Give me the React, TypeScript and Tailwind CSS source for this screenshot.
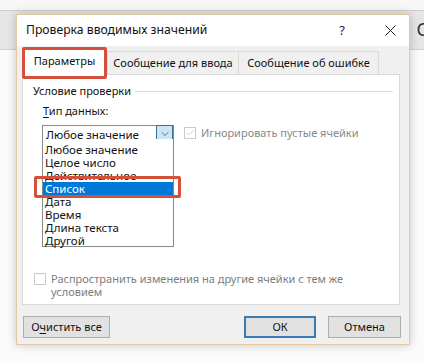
import { Check, ChevronDown } from 'lucide-react';

const font = { fontFamily: '"Noto Sans", "Open Sans", sans-serif' };

const items = [
  'Любое значение',
  'Целое число',
  'Действительное',
  'Список',
  'Дата',
  'Время',
  'Длина текста',
  'Другой',
];

function CloseIcon() {
  return (
    <svg width="11" height="11" viewBox="0 0 11 11" className="text-[#222]">
      <path d="M0.5 0.5 L10.5 10.5 M10.5 0.5 L0.5 10.5" stroke="currentColor" strokeWidth="1" />
    </svg>
  );
}

function Button({ children, primary, className }: { children: React.ReactNode; primary?: boolean; className?: string }) {
  return (
    <div
      className={
        'h-[22px] flex items-center justify-center bg-[#e1e1e1] text-[11px] text-[#111] whitespace-nowrap ' +
        (primary ? 'border-2 border-[#3a7bb0] ' : 'border border-[#adadad] ') +
        (className ?? '')
      }
    >
      {children}
    </div>
  );
}

export default function App() {
  return (
    <div className="relative w-[424px] h-[361px] overflow-hidden bg-[#fbfbfb]" style={font}>
      {/* excel ribbon behind the dialog */}
      <div className="h-[11px] bg-[#f7f7f7] border-b border-[#cfcfcf]" />
      <div className="h-[39px] bg-[#e6e6e6] border-b border-[#d2d2d2] flex justify-end items-center">
        <span className="text-[18px] text-[#333] leading-none mr-[-4px] mb-[2px]">С</span>
      </div>

      {/* dialog window */}
      <div className="absolute left-[16px] top-[14px] w-[394px] h-[331px] border border-[#e2c9a2] bg-[#f0f0f0] shadow-[0_0_9px_rgba(0,0,0,0.22)] flex flex-col">
        <div className="h-[31px] bg-white flex items-center pl-[9px] shrink-0">
          <span className="text-[12.2px] text-[#111] whitespace-nowrap">Проверка вводимых значений</span>
          <span className="ml-auto mr-[40px] text-[13px] text-[#222]">?</span>
          <div className="mr-[13px] flex items-center">
            <CloseIcon />
          </div>
        </div>

        <div className="pl-[5px] pr-[9px] pt-[2px] flex flex-col">
          {/* tabs */}
          <div className="relative flex items-end h-[27px] whitespace-nowrap">
            <div className="w-[85px] h-[27px] bg-white flex items-center justify-center text-[11px] text-[#111] relative z-10">
              Параметры
            </div>
            <div className="w-[132px] h-[24px] border border-b-0 border-[#d9d9d9] bg-[#f0f0f0] flex items-center justify-center text-[11px] text-[#111]">
              Сообщение для ввода
            </div>
            <div className="w-[140px] h-[24px] border border-b-0 border-l-0 border-[#d9d9d9] bg-[#f0f0f0] flex items-center justify-center text-[11px] text-[#111]">
              Сообщение об ошибке
            </div>
            <div className="absolute left-0 top-[-1px] w-[85px] h-[32px] border-[3px] border-[#d4503a] rounded-[2px] z-20" />
          </div>

          {/* tab panel */}
          <div className="relative h-[231px] bg-white border border-[#d9d9d9] mt-[-1px] pl-[10px] pr-[6px]">
            <div className="flex items-center mt-[8px] h-[16px]">
              <span className="text-[11px] text-[#111] whitespace-nowrap">Условие проверки</span>
              <div className="flex-1 h-px bg-[#dcdcdc] ml-[4px]" />
            </div>

            <div className="pl-[10px] mt-[4px] text-[11px] text-[#111] h-[16px] leading-[16px]">
              <span className="underline underline-offset-2">Т</span>ип данных:
            </div>

            <div className="flex items-start mt-[6px] ml-[9px]">
              <div className="w-[132px] h-[18px] border border-[#8a8a8a] border-b-0 flex items-center text-[11.5px] text-[#111] pl-[3px] relative">
                Любое значение
                <div className="absolute right-[0px] top-[-1px] w-[17px] h-[17px] bg-[#cce4f7] border border-[#3c6f95] flex items-center justify-center">
                  <ChevronDown size={12} strokeWidth={1.3} className="text-[#333]" />
                </div>
              </div>
              <div className="ml-[10px] mt-[2px] w-[12px] h-[12px] border border-[#c9c9c9] flex items-center justify-center">
                <Check size={10} strokeWidth={1.5} className="text-[#b5b5b5]" />
              </div>
              <span className="ml-[5px] text-[11px] text-[#888] leading-[16px] whitespace-nowrap">Игнорировать пустые ячейки</span>
            </div>

            {/* opened list */}
            <div className="absolute left-[19px] top-[64px] w-[132px] h-[108px] border border-[#8a8a8a] border-t-0 bg-white pt-[4px] z-10">
              {items.map(item => (
                <div
                  key={item}
                  className={
                    'h-[13px] leading-[13px] text-[11.5px] pl-[2px] ' +
                    (item === 'Список' ? 'bg-[#0078d7] text-white' : 'text-[#111]')
                  }
                >
                  {item}
                </div>
              ))}
            </div>
            <div className="absolute left-[11px] top-[101px] w-[147px] h-[22px] border-[3px] border-[#d4503a] rounded-[2px] z-20" />

            <div className="absolute left-[11px] top-[197px] flex items-start">
              <div className="w-[12px] h-[12px] border border-[#c9c9c9] bg-white mt-[1px]" />
              <div className="ml-[5px] text-[11px] leading-[13px] text-[#7d7d7d] w-[300px]">
                Распространить изменения на другие ячейки с тем же условием
              </div>
            </div>
          </div>

          {/* buttons */}
          <div className="flex items-center mt-[11px] pl-[1px]">
            <Button className="w-[87px]">
              О<span className="underline underline-offset-2">ч</span>истить все
            </Button>
            <Button primary className="w-[72px] ml-auto">
              ОК
            </Button>
            <Button className="w-[73px] ml-[12px] mr-[-1px]">Отмена</Button>
          </div>
        </div>
      </div>
    </div>
  );
}
